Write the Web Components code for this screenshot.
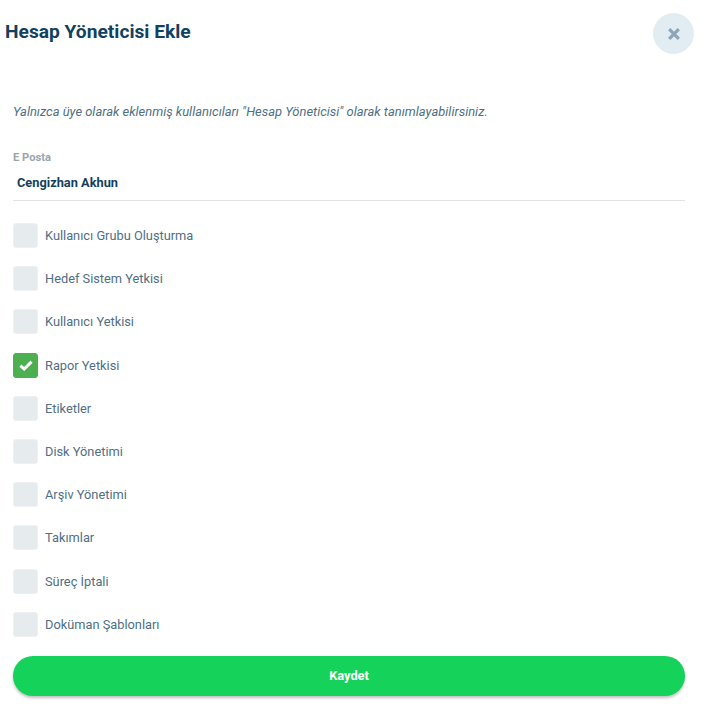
<!DOCTYPE html>
<html lang="tr">
<head>
<meta charset="utf-8">
<title>Hesap Yöneticisi Ekle</title>
<style>
  html, body { margin: 0; padding: 0; background: #fff; }
  body { font-family: Roboto, "Liberation Sans", sans-serif; }
</style>
</head>
<body>
<account-manager-form></account-manager-form>

<script>
class CloseButton extends HTMLElement {
  constructor() {
    super();
    const shadowRoot = this.attachShadow({ mode: "open" });
    shadowRoot.innerHTML = `
    <style>
      :host {
        display: flex;
        width: 41px;
        height: 41px;
        box-sizing: border-box;
        border-radius: 50%;
        background: #e1ecf3;
        border: 1px solid #e9eef1;
        align-items: center;
        justify-content: center;
      }
      svg { display: block; }
    </style>
    <svg width="14" height="14" viewBox="0 0 14 14">
      <path d="M2.2 2.2 L11.8 11.8 M11.8 2.2 L2.2 11.8" stroke="#8ba6b7" stroke-width="3.2" fill="none"/>
    </svg>`;
  }
}

class CheckRow extends HTMLElement {
  constructor() {
    super();
    const shadowRoot = this.attachShadow({ mode: "open" });
    const tick = this.hasAttribute("checked")
      ? `<svg width="14" height="11" viewBox="0 0 14 11"><path d="M1.4 5.6 L5.2 9 L12.6 1.6" stroke="#fff" stroke-width="3" fill="none"/></svg>`
      : "";
    shadowRoot.innerHTML = `
    <style>
      :host {
        display: flex;
        align-items: center;
        gap: 7px;
        height: 25px;
      }
      .box {
        width: 25px;
        height: 25px;
        box-sizing: border-box;
        border-radius: 3px;
        background: #e6ebee;
        border: 1px solid #eef1f3;
        display: flex;
        align-items: center;
        justify-content: center;
        flex: none;
      }
      :host([checked]) .box {
        background: #4caf50;
        border-color: #4caf50;
      }
      .text {
        font-size: 12.8px;
        color: #4f6f85;
      }
    </style>
    <span class="box">${tick}</span>
    <span class="text"><slot></slot></span>`;
  }
}

class SaveButton extends HTMLElement {
  constructor() {
    super();
    const shadowRoot = this.attachShadow({ mode: "open" });
    shadowRoot.innerHTML = `
    <style>
      :host {
        display: flex;
        height: 40px;
        box-sizing: border-box;
        padding-bottom: 1px;
        border-radius: 20px;
        background: #15d35a;
        color: #fff;
        font-size: 12.8px;
        font-weight: 700;
        align-items: center;
        justify-content: center;
        box-shadow: 0 2px 3px rgba(0, 0, 0, 0.25);
      }
    </style>
    <slot></slot>`;
  }
}

class AccountManagerForm extends HTMLElement {
  constructor() {
    super();
    const shadowRoot = this.attachShadow({ mode: "open" });
    const items = [
      ["Kullanıcı Grubu Oluşturma"],
      ["Hedef Sistem Yetkisi"],
      ["Kullanıcı Yetkisi"],
      ["Rapor Yetkisi", true],
      ["Etiketler"],
      ["Disk Yönetimi"],
      ["Arşiv Yönetimi"],
      ["Takımlar"],
      ["Süreç İptali"],
      ["Doküman Şablonları"],
    ];
    const rows = items
      .map(([label, checked]) => `<check-row ${checked ? "checked" : ""}>${label}</check-row>`)
      .join("");
    shadowRoot.innerHTML = `
    <style>
      :host {
        display: block;
        width: 706px;
        height: 708px;
        box-sizing: border-box;
        padding: 13px 12px 0 5px;
        font-family: Roboto, "Liberation Sans", sans-serif;
        overflow: hidden;
      }
      header {
        display: flex;
        justify-content: space-between;
        align-items: flex-start;
      }
      h2 {
        margin: 8px 0 0;
        font-size: 19.2px;
        line-height: 22px;
        font-weight: 700;
        color: #11415f;
      }
      .body {
        padding: 0 9px 0 8px;
      }
      .note {
        margin: 49px 0 0;
        font-size: 12.93px;
        line-height: 18px;
        font-style: italic;
        color: #4f6f85;
      }
      .label {
        margin-top: 31px;
        font-size: 11.2px;
        line-height: 12px;
        font-weight: 700;
        color: #9aa5ab;
      }
      .value {
        padding: 10px 4px 9px;
        height: 17px;
        font-size: 12.8px;
        line-height: 17px;
        font-weight: 700;
        color: #143f5c;
        border-bottom: 1px solid #e0e4e7;
      }
      .rows {
        margin-top: 22px;
        display: flex;
        flex-direction: column;
        gap: 18.2px;
      }
      save-button { margin-top: 19.45px; }
    </style>
    <header>
      <h2>Hesap Yöneticisi Ekle</h2>
      <close-button></close-button>
    </header>
    <div class="body">
      <p class="note">Yalnızca üye olarak eklenmiş kullanıcıları "Hesap Yöneticisi" olarak tanımlayabilirsiniz.</p>
      <div class="label">E Posta</div>
      <div class="value">Cengizhan Akhun</div>
      <div class="rows">${rows}</div>
      <save-button>Kaydet</save-button>
    </div>`;
  }
}

window.customElements.define("close-button", CloseButton);
window.customElements.define("check-row", CheckRow);
window.customElements.define("save-button", SaveButton);
window.customElements.define("account-manager-form", AccountManagerForm);
</script>
</body>
</html>
